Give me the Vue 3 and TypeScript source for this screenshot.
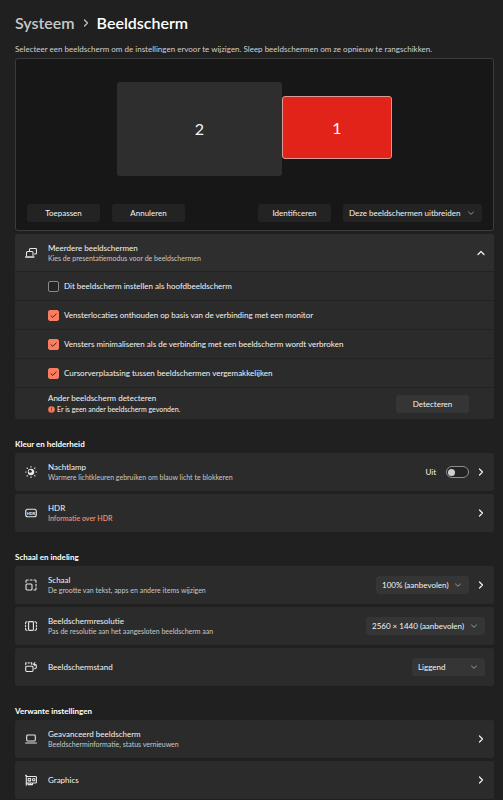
<script setup lang="ts">
import { ref } from 'vue'

interface Option {
  id: string
  label: string
  checked: boolean
}

interface Row {
  id: string
  icon: string
  title: string
  note?: string
  link?: string
  toggle?: boolean
  select?: string[]
  wide?: boolean
  chevron?: boolean
}

interface Group {
  title: string
  rows: Row[]
}

const options = ref<Option[]>([
  { id: 'main', label: 'Dit beeldscherm instellen als hoofdbeeldscherm', checked: false },
  { id: 'remember', label: 'Vensterlocaties onthouden op basis van de verbinding met een monitor', checked: true },
  { id: 'minimise', label: 'Vensters minimaliseren als de verbinding met een beeldscherm wordt verbroken', checked: true },
  { id: 'cursor', label: 'Cursorverplaatsing tussen beeldschermen vergemakkelijken', checked: true },
])

const expanded = ref(true)
const nightLight = ref(false)

const groups: Group[] = [
  {
    title: 'Kleur en helderheid',
    rows: [
      {
        id: 'night',
        icon: 'sun',
        title: 'Nachtlamp',
        note: 'Warmere lichtkleuren gebruiken om blauw licht te blokkeren',
        toggle: true,
        chevron: true,
      },
      { id: 'hdr', icon: 'hdr', title: 'HDR', link: 'Informatie over HDR', chevron: true },
    ],
  },
  {
    title: 'Schaal en indeling',
    rows: [
      {
        id: 'scale',
        icon: 'scale',
        title: 'Schaal',
        note: 'De grootte van tekst, apps en andere items wijzigen',
        select: ['100% (aanbevolen)', '125%', '150%'],
        chevron: true,
      },
      {
        id: 'resolution',
        icon: 'resolution',
        title: 'Beeldschermresolutie',
        note: 'Pas de resolutie aan het aangesloten beeldscherm aan',
        select: ['2560 × 1440 (aanbevolen)', '1920 × 1080'],
      },
      {
        id: 'orientation',
        icon: 'orientation',
        title: 'Beeldschermstand',
        select: ['Liggend', 'Staand'],
        wide: true,
      },
    ],
  },
  {
    title: 'Verwante instellingen',
    rows: [
      {
        id: 'advanced',
        icon: 'laptop',
        title: 'Geavanceerd beeldscherm',
        note: 'Beeldscherminformatie, status vernieuwen',
        chevron: true,
      },
      { id: 'graphics', icon: 'graphics', title: 'Graphics', chevron: true },
    ],
  },
]
</script>

<template>
  <main class="page">
    <nav class="crumbs" aria-label="Locatie">
      <a href="#systeem" class="crumb-parent">Systeem</a>
      <svg class="crumb-arrow" viewBox="0 0 8 8" aria-hidden="true"><path d="M2.5 1 5.5 4 2.5 7" /></svg>
      <h1>Beeldscherm</h1>
    </nav>
    <p class="intro">
      Selecteer een beeldscherm om de instellingen ervoor te wijzigen. Sleep beeldschermen om ze opnieuw te rangschikken.
    </p>

    <section class="arrange">
      <div class="screens">
        <button type="button" class="screen screen-two">2</button>
        <button type="button" class="screen screen-one">1</button>
      </div>
      <div class="actions">
        <button type="button" class="button">Toepassen</button>
        <button type="button" class="button">Annuleren</button>
        <button type="button" class="button identify">Identificeren</button>
        <span class="picker">
          <select aria-label="Weergavemodus">
            <option>Deze beeldschermen uitbreiden</option>
            <option>Deze beeldschermen dupliceren</option>
          </select>
          <svg viewBox="0 0 6 6" aria-hidden="true"><path d="M.5 2 3 4.3 5.5 2" /></svg>
        </span>
      </div>
    </section>

    <section class="multi">
      <button type="button" class="card-line multi-head" :aria-expanded="expanded" @click="expanded = !expanded">
        <svg class="icon" viewBox="0 0 12 12" aria-hidden="true">
          <path d="M4.5 3.5v-1a1 1 0 0 1 1-1h5a1 1 0 0 1 1 1V6a1 1 0 0 1-1 1h-1" />
          <path d="M1.5 8.5v-3a1 1 0 0 1 1-1H7a1 1 0 0 1 1 1v3" />
          <path class="thick" d="M.7 9.9h8.2" />
        </svg>
        <span class="texts">
          <span class="title">Meerdere beeldschermen</span>
          <span class="note">Kies de presentatiemodus voor de beeldschermen</span>
        </span>
        <svg class="chevron" viewBox="0 0 8 8" aria-hidden="true"><path d="M1 5.5 4 2.5 7 5.5" /></svg>
      </button>
      <template v-if="expanded">
        <label v-for="option in options" :key="option.id" class="option">
          <span class="box">
            <input v-model="option.checked" type="checkbox" />
            <svg viewBox="0 0 11 11" aria-hidden="true"><path d="M3 5.7 4.8 7.4 8.2 3.9" /></svg>
          </span>
          <span>{{ option.label }}</span>
        </label>
        <div class="detect">
          <div class="texts">
            <span class="title">Ander beeldscherm detecteren</span>
            <span class="status">
              <svg viewBox="0 0 7 7" aria-hidden="true">
                <circle cx="3.5" cy="3.5" r="3.3" />
                <path d="M3.5 1.8v1.900M3.5 5v.2" />
              </svg>
              Er is geen ander beeldscherm gevonden.
            </span>
          </div>
          <button type="button" class="button raised">Detecteren</button>
        </div>
      </template>
    </section>

    <section v-for="group in groups" :key="group.title" class="group">
      <h2>{{ group.title }}</h2>
      <div class="cards">
        <div v-for="row in group.rows" :key="row.id" class="card-line card">
          <svg class="icon" viewBox="0 0 12 12" aria-hidden="true">
            <template v-if="row.icon === 'sun'">
              <circle class="solid" cx="6" cy="6" r="3.2" />
              <circle class="shade" cx="5.2" cy="5.2" r="1.5" />
              <path
                d="M6 .6v.5M6 10.900v.5M.6 6h.5M10.900 6h.5M2 2l.4.4M9.600 9.600l.4.4M2 10l.4-.4M9.600 2.400l.4-.4"
              />
            </template>
            <template v-else-if="row.icon === 'hdr'">
              <rect x=".7" y="2.2" width="10.6" height="7.6" rx="2" />
              <text x="6" y="7.700" text-anchor="middle">HDR</text>
            </template>
            <template v-else-if="row.icon === 'scale'">
              <rect x="1" y="5" width="6" height="6" rx="1" />
              <path d="M1 3.300V2a1 1 0 0 1 1-1h1.300M5.200 1h1.800M8.900 1H10a1 1 0 0 1 1 1v1.300M11 5.200v1.800M11 8.900V10a1 1 0 0 1-1 1H8.900" />
            </template>
            <template v-else-if="row.icon === 'resolution'">
              <rect x="3.6" y="1.6" width="4.8" height="8.8" rx=".8" />
              <path
                d="M2.100 1.800H1.800a1.200 1.200 0 0 0-1.200 1.200v.7M.6 5.300v1.400M.6 8.300V9a1.200 1.200 0 0 0 1.200 1.200h.3M9.900 1.800h.3A1.200 1.200 0 0 1 11.400 3v.7M11.400 5.300v1.400M11.400 8.300V9a1.200 1.200 0 0 1-1.200 1.200h-.3"
              />
            </template>
            <template v-else-if="row.icon === 'orientation'">
              <rect x=".7" y="5.3" width="7.3" height="5.2" rx=".9" />
              <path d="M.7 3.600V1.900h.6M3.200 1.900h1M6 1.900h.8v1.700" />
              <path d="M8.600 3.200h1a1.800 1.800 0 0 1 1.800 1.800v.9a1.800 1.800 0 0 1-1.800 1.800M10 1.700 8.500 3.200 10 4.700" />
            </template>
            <template v-else-if="row.icon === 'laptop'">
              <rect x="1.7" y="2" width="8.6" height="6" rx=".9" />
              <path d="M.6 10h10.800" />
            </template>
            <template v-else>
              <path d="M.5 1.200h.8v10" />
              <path d="M1.300 2.500h9.300a.8.8 0 0 1 .8.8v4.900a.8.8 0 0 1-.8.8H1.300M3 9.200v1.400h4.500V9.200M5.200 9.200v1.400" />
              <rect x="3.2" y="4.5" width="2.4" height="2.4" />
              <circle cx="8.700" cy="5.700" r="1.2" />
            </template>
          </svg>
          <div class="texts">
            <label v-if="row.select || row.toggle" class="title" :for="row.id">{{ row.title }}</label>
            <span v-else class="title">{{ row.title }}</span>
            <span v-if="row.note" class="note">{{ row.note }}</span>
            <a v-if="row.link" class="link" href="#hdr">{{ row.link }}</a>
          </div>
          <span v-if="row.toggle" class="toggle">
            <span>{{ nightLight ? 'Aan' : 'Uit' }}</span>
            <input :id="row.id" v-model="nightLight" type="checkbox" role="switch" />
          </span>
          <span v-if="row.select" class="picker raised" :class="{ wide: row.wide }">
            <select :id="row.id">
              <option v-for="choice in row.select" :key="choice">{{ choice }}</option>
            </select>
            <svg viewBox="0 0 6 6" aria-hidden="true"><path d="M.5 2 3 4.3 5.5 2" /></svg>
          </span>
          <button v-if="row.chevron" type="button" class="open" :aria-label="row.title">
            <svg class="chevron" viewBox="0 0 8 8" aria-hidden="true"><path d="M2.5 1 5.5 4 2.5 7" /></svg>
          </button>
        </div>
      </div>
    </section>
  </main>
</template>

<style>
body {
  background: #202020;
}
</style>

<style scoped>
.page {
  padding: 14px 9px 0 15px;
  color: #f4f4f4;
  font: 8px/10px Lato, 'Open Sans', sans-serif;
}

button,
select {
  margin: 0;
  border: 0;
  color: inherit;
  font: inherit;
}

svg {
  flex: none;
  fill: none;
  stroke: currentColor;
  stroke-linecap: round;
  stroke-linejoin: round;
}

.crumbs {
  display: flex;
  align-items: center;
  gap: 7px;
  font-size: 16px;
  line-height: 18px;
  font-weight: 600;
}

.crumb-parent {
  color: #c8c8c8;
  text-decoration: none;
}

.crumb-arrow {
  width: 8px;
  height: 8px;
  color: #c8c8c8;
  stroke-width: 1.2;
}

h1 {
  margin: 0;
  color: #fff;
  font: inherit;
}

.intro {
  margin: 12px 0 4px;
  color: #d0d0d0;
}

.arrange {
  padding: 23px 11px 8px;
  border: 1px solid #3c3c3c;
  border-radius: 3px;
  background: #171717;
}

.screens {
  display: flex;
  justify-content: center;
  align-items: flex-start;
}

.screen {
  padding: 0;
  border-radius: 3px;
  font-size: 16px;
}

.screen-two {
  width: 165px;
  height: 94px;
  background: #2e2e2e;
}

.screen-one {
  width: 110px;
  height: 63px;
  margin-top: 14px;
  border: 1px solid #d79a96;
  background: #e2231a;
  color: #fff;
}

.actions {
  display: flex;
  gap: 12px;
  margin-top: 28px;
}

.button {
  width: 73px;
  height: 18px;
  padding: 0;
  border-radius: 3px;
  background: #232323;
}

.identify {
  margin-left: auto;
}

.picker {
  display: grid;
  align-items: center;
  border-radius: 3px;
  background: #232323;
}

.button.raised,
.picker.raised {
  background: #353535;
}

.picker select,
.picker svg {
  grid-area: 1 / 1;
}

.picker select {
  width: 100%;
  height: 18px;
  padding: 0 20px 0 6px;
  border-radius: 3px;
  background: transparent;
  appearance: none;
}

.picker option {
  background: #2b2b2b;
}

.picker svg {
  justify-self: end;
  width: 6px;
  height: 6px;
  margin-right: 8px;
  color: #b0b0b0;
  stroke-width: 0.8;
  pointer-events: none;
}

.picker.wide {
  width: 73px;
}

.multi {
  margin-top: 3px;
  border-radius: 3px;
  overflow: hidden;
  background: #2b2b2b;
}

.card-line {
  display: flex;
  align-items: center;
  box-sizing: border-box;
  padding: 0 9px 0 10px;
}

.multi-head {
  width: 100%;
  height: 37px;
  background: #2e2e2e;
  text-align: left;
}

.icon {
  width: 12px;
  height: 12px;
  margin-right: 11px;
  color: #e6e6e6;
  stroke-width: 1.1;
}

.icon .thick {
  stroke-width: 1.5;
}

.icon .solid {
  fill: currentColor;
  stroke: none;
}

.icon .shade {
  fill: #2b2b2b;
  stroke: none;
}

.icon text {
  fill: currentColor;
  stroke: none;
  font-size: 4px;
  font-weight: 900;
}

.texts {
  display: flex;
  flex: 1;
  flex-direction: column;
  align-items: flex-start;
}

.note,
.link,
.status {
  font-size: 7px;
}

.note {
  color: #c8c8c8;
}

.link {
  color: #e8937c;
  font-weight: 600;
  text-decoration: none;
}

.chevron {
  display: block;
  width: 8px;
  height: 8px;
  stroke-width: 1.2;
}

.option {
  display: flex;
  align-items: center;
  gap: 5px;
  height: 28px;
  padding-left: 33px;
  border-top: 1px solid #232323;
}

.box {
  display: grid;
}

.box input,
.box svg {
  grid-area: 1 / 1;
  width: 11px;
  height: 11px;
}

.box input {
  margin: 0;
  border: 1px solid #8a8a8a;
  border-radius: 2px;
  background: #242424;
  appearance: none;
}

.box input:checked {
  border-color: #fa7d62;
  background: #fa7d62;
}

.box svg {
  color: #4a1c12;
  visibility: hidden;
  pointer-events: none;
}

.box input:checked + svg {
  visibility: visible;
}

.detect {
  display: flex;
  align-items: center;
  height: 31px;
  padding: 0 25px 0 33px;
  border-top: 1px solid #232323;
}

.status {
  display: flex;
  align-items: center;
  gap: 2px;
  margin-top: 1px;
}

.status svg {
  width: 7px;
  height: 7px;
}

.status circle {
  fill: #f5785c;
  stroke: none;
}

.status path {
  stroke: #8a3c2c;
  stroke-width: 0.8;
}

.group {
  margin-top: 20px;
}

h2 {
  margin: 0 0 4px;
  color: #fff;
  font: inherit;
  font-weight: 700;
}

.cards {
  display: grid;
  gap: 3px;
}

.card {
  min-height: 38px;
  border-radius: 3px;
  background: #2b2b2b;
}

.toggle {
  display: flex;
  align-items: center;
  gap: 10px;
}

.toggle input {
  display: flex;
  align-items: center;
  box-sizing: border-box;
  width: 23px;
  height: 12px;
  margin: 0;
  padding: 0 1px;
  border: 1px solid #8e8e8e;
  border-radius: 6px;
  background: #232323;
  appearance: none;
}

.toggle input::before {
  width: 7px;
  height: 7px;
  border-radius: 4px;
  background: #cfcfcf;
  content: '';
}

.toggle input:checked {
  justify-content: flex-end;
  background: #fa7d62;
}

.open {
  margin-left: 8px;
  padding: 0;
  background: transparent;
}
</style>
